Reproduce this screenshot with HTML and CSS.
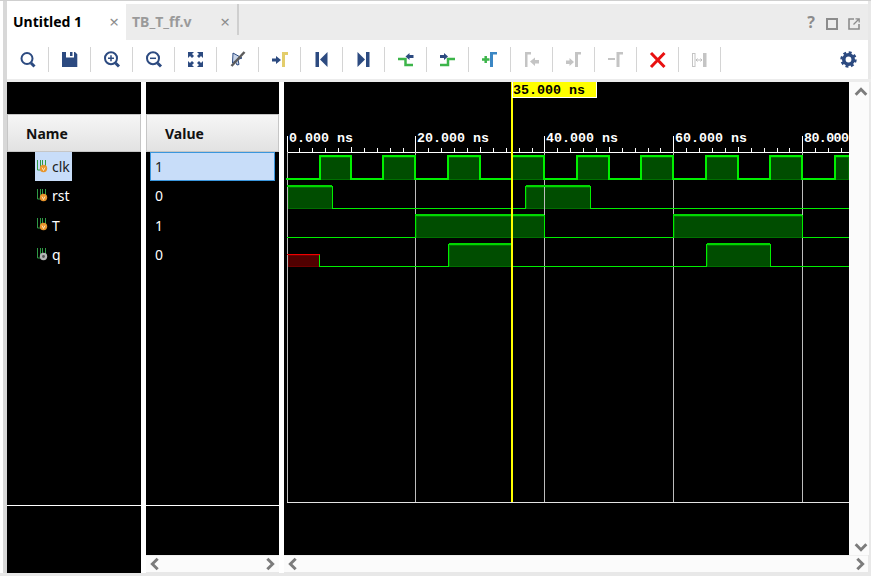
FILE: index.html
```html
<!DOCTYPE html>
<html lang="en">
<head>
    <meta charset="UTF-8">
    <title>Untitled 1</title>
    <link rel="stylesheet" href="styles.css">
</head>
<body>

<svg class="defs" width="0" height="0">
    <symbol id="sig-in" viewBox="0 0 12 14">
        <path d="M1.5 1v10h3V1M6.5 1v6h3V1" fill="none" stroke="#2f9a45"/>
        <circle cx="7.5" cy="9.5" r="3.7" fill="#e8952c"/>
        <path d="M6 8.5l1.5 3 1.5-3" fill="none" stroke="#fff3d8" stroke-width=".8"/>
    </symbol>
    <symbol id="sig-out" viewBox="0 0 12 14">
        <path d="M1.5 1v10h3V1M6.5 1v6h3V1" fill="none" stroke="#2f9a45"/>
        <circle cx="7.5" cy="9.5" r="3.7" fill="#b5b5b5"/>
        <circle cx="7.5" cy="9.5" r="1.4" fill="#555"/>
    </symbol>
</svg>

<div class="window">
    <div class="tabbar">
        <div class="tab active"><span>Untitled 1</span><span class="tab-close">×</span></div>
        <div class="tab"><span>TB_T_ff.v</span><span class="tab-close">×</span></div>
        <div class="tab-sep"></div>
        <div class="tab-tools">
            <span class="help">?</span>
            <svg width="12" height="12" viewBox="0 0 12 12"><rect x="1" y="1" width="10" height="10" fill="none" stroke="#8c8c8c" stroke-width="2"/></svg>
            <svg width="12" height="12" viewBox="0 0 12 12"><path d="M6 1H1v10h10V6" fill="none" stroke="#8c8c8c" stroke-width="1.6"/><path d="M5.5 6.500L11 1M7.500 .8H11.200V4.500" fill="none" stroke="#8c8c8c" stroke-width="1.300"/></svg>
        </div>
    </div>

    <div class="toolbar">
        <div class="tool"><svg viewBox="0 0 21 21"><circle cx="10" cy="9.500" r="5.500" class="ln"/><path d="M14 14l3.500 3.500" class="ln thick"/></svg></div>
        <div class="tool"><svg viewBox="0 0 21 21"><path d="M3 3h13l2.300 2.300V18H3z" class="navy"/><rect x="7" y="3" width="8" height="5.500" fill="#fff"/><rect x="11" y="3" width="2.500" height="4" class="navy"/></svg></div>
        <div class="tool"><svg viewBox="0 0 21 21"><circle cx="10" cy="9.300" r="6" class="ln"/><path d="M14.500 14l3.500 3.500" class="ln thick"/><path d="M7 9.300h6M10 6.300v6" class="ln thin"/></svg></div>
        <div class="tool"><svg viewBox="0 0 21 21"><circle cx="10" cy="9.300" r="6" class="ln"/><path d="M14.500 14l3.500 3.500" class="ln thick"/><path d="M7 9.300h6" class="ln thin"/></svg></div>
        <div class="tool"><svg viewBox="0 0 21 21"><path d="M3 3h6L7 5l2 2-2 2-2-2-2 2zM18 3v6l-2-2-2 2-2-2 2-2-2-2zM3 18v-6l2 2 2-2 2 2-2 2 2 2zM18 18h-6l2-2-2-2 2-2 2 2 2-2z" class="navy"/></svg></div>
        <div class="tool"><svg viewBox="0 0 21 21"><path d="M6 4l9 5-4 1.500 1 5-2 .5-2-4-2.500 2z" fill="#c9d5e8" stroke="#2c4a80"/><path d="M17.500 3L4.500 17" stroke="#5c5c5c" stroke-width="2.500" fill="none"/></svg></div>
        <div class="tool"><svg viewBox="0 0 21 21"><path d="M3 9.500h4V7l5 4-5 4v-2.500H3z" class="navy"/><path d="M13 18V3h6v3h-3v12z" fill="#e3cd6b"/></svg></div>
        <div class="tool"><svg viewBox="0 0 21 21"><rect x="4.500" y="3" width="3.500" height="15" class="navy"/><path d="M9 10.500L16.500 3v15z" class="navy"/></svg></div>
        <div class="tool"><svg viewBox="0 0 21 21"><path d="M4.500 3l7.500 7.500L4.500 18z" class="navy"/><rect x="13" y="3" width="3.500" height="15" class="navy"/></svg></div>
        <div class="tool"><svg viewBox="0 0 21 21"><path d="M3 10h7.500v6h7.500" class="edge"/><path d="M10.500 7.500l4-3.500v2h4v3h-4v2z" class="navy"/></svg></div>
        <div class="tool"><svg viewBox="0 0 21 21"><path d="M3 16h8v-6h7" class="edge"/><path d="M11 7.500l-4-3.500v2H3v3h4v2z" class="navy"/></svg></div>
        <div class="tool"><svg viewBox="0 0 21 21"><path d="M3 10.500h7.500M6.700 7v7" class="edge"/><path d="M11 18V3h7v2.500h-4V18z" fill="#3b87c4"/></svg></div>
        <div class="tool"><svg viewBox="0 0 21 21"><path d="M4 18V3h6v2.500H6.500V18z" class="off"/><path d="M9 12.500l5-4v2.500h4v3.500h-4V17z" class="off"/></svg></div>
        <div class="tool"><svg viewBox="0 0 21 21"><path d="M3 11.500h3.500V9l4.500 4-4.500 4v-2H3z" class="off"/><path d="M12 18V3h6v2.500h-3V18z" class="off"/></svg></div>
        <div class="tool"><svg viewBox="0 0 21 21"><rect x="3" y="9" width="7" height="2" class="off"/><path d="M11.500 18V3H18v2.500h-3.500V18z" class="off"/></svg></div>
        <div class="tool"><svg viewBox="0 0 21 21"><path d="M4 4l13.500 14M17.500 4L4 18" fill="none" stroke="#e81010" stroke-width="3"/></svg></div>
        <div class="tool"><svg viewBox="0 0 21 21"><rect x="3.500" y="4.500" width="2.500" height="13" fill="none" stroke="#c4c4c4"/><rect x="14" y="4" width="3.500" height="14" class="off"/><path d="M7 11h6M8.500 9.500L7 11l1.500 1.500M11.500 9.500L13 11l-1.500 1.500" fill="none" stroke="#bdbdbd"/></svg></div>
        <div class="gear"><svg viewBox="0 0 21 21"><circle cx="10.500" cy="10.500" r="4.700" fill="none" stroke="#2c4a80" stroke-width="3.600"/><circle cx="10.500" cy="10.500" r="7" fill="none" stroke="#2c4a80" stroke-width="2.400" stroke-dasharray="2.900 2.600"/></svg></div>
    </div>

    <div class="strip"></div>

    <div class="panes">
        <div class="col name-col">
            <div class="col-top"></div>
            <div class="col-head">Name</div>
            <div class="rows">
                <div class="row"><div class="sig selected"><svg class="sig-icon"><use href="#sig-in"/></svg>clk</div></div>
                <div class="row"><div class="sig"><svg class="sig-icon"><use href="#sig-in"/></svg>rst</div></div>
                <div class="row"><div class="sig"><svg class="sig-icon"><use href="#sig-in"/></svg>T</div></div>
                <div class="row"><div class="sig"><svg class="sig-icon"><use href="#sig-out"/></svg>q</div></div>
            </div>
            <div class="col-foot name-foot"></div>
        </div>

        <div class="col value-col">
            <div class="col-top"></div>
            <div class="col-head">Value</div>
            <div class="rows">
                <div class="row"><div class="val selected">1</div></div>
                <div class="row"><div class="val">0</div></div>
                <div class="row"><div class="val">1</div></div>
                <div class="row"><div class="val">0</div></div>
            </div>
            <div class="col-foot"></div>
            <div class="hbar">
                <svg class="chev" viewBox="0 0 12 12"><path d="M8 2L4 6l4 4"/></svg>
                <svg class="chev" viewBox="0 0 12 12"><path d="M4 2l4 4-4 4"/></svg>
            </div>
        </div>

        <div class="col wave-col">
            <div class="wave-main">
                <svg class="wave" viewBox="284 82 565 473">
                    <!-- ruler -->
                    <path class="ruler" d="M287.500 136V152M415.500 136V152M544.500 136V152M673.500 136V152M802.500 136V152M287 152.500H849"/>
                    <path class="ruler" d="M299.500 148v4M312.500 148v4M325.500 148v4M338.500 148v4M351.500 147v5M364.500 148v4M377.500 148v4M390.500 148v4M403.500 148v4
                        M428.500 148v4M441.500 148v4M454.500 148v4M467.500 148v4M480.500 147v5M493.500 148v4M506.500 148v4M519.500 148v4M532.500 148v4
                        M557.500 148v4M570.500 148v4M583.500 148v4M596.500 148v4M609.500 147v5M622.500 148v4M635.500 148v4M648.500 148v4M660.500 148v4
                        M686.500 148v4M699.500 148v4M712.500 148v4M725.500 148v4M738.500 147v5M751.500 148v4M764.500 148v4M777.500 148v4M789.500 148v4
                        M815.500 148v4M828.500 148v4M841.500 148v4"/>
                    <text class="ruler-label" x="289" y="142">0.000 ns</text>
                    <text class="ruler-label" x="417" y="142">20.000 ns</text>
                    <text class="ruler-label" x="546" y="142">40.000 ns</text>
                    <text class="ruler-label" x="675" y="142">60.000 ns</text>
                    <text class="ruler-label" x="804" y="142" textLength="45">80.000</text>

                    <!-- fills -->
                    <path class="fill" d="M320 157H351V179H320zM383 157H415V179H383zM448 157H480V179H448zM512 157H544V179H512zM577 157H609V179H577zM641 157H673V179H641zM706 157H738V179H706zM770 157H802V179H770zM835 157H848V179H835z"/>
                    <path class="fill" d="M288 187H332V208H288zM526 187H590V208H526z"/>
                    <path class="fill" d="M416 216H544V237H416zM674 216H802V237H674z"/>
                    <path class="fill" d="M449 245H511V266H449zM707 245H770V266H707z"/>
                    <rect class="fill-x" x="288" y="255" width="31" height="11"/>

                    <!-- grid -->
                    <path class="grid" d="M287.500 152V502M415.500 152V502M544.500 152V502M673.500 152V502M802.500 152V502"/>
                    <path class="frame-line" d="M287 502.500H849"/>

                    <!-- traces -->
                    <path class="trace" d="M286 179H320V156H351V179H383V156H415V179H448V156H480V179H512V156H544V179H577V156H609V179H641V156H673V179H706V156H738V179H770V156H802V179H835V156H849"/>
                    <path class="trace-top" d="M287 186H332M526 186H590M415 215H544M673 215H802M449 244H511M707 244H770"/>
                    <path class="trace-thin" d="M332.500 186V208.500H525.500V186M590.500 186V208.500H849"/>
                    <path class="trace-thin" d="M287 237.500H415.500V215M544.500 215V237.500H673.500V215M802.500 215V237.500H849"/>
                    <path class="trace-thin" d="M319.500 255V266.500H448.500V244M511 266.500H706.500V244M770.500 244V266.500H849"/>
                    <path class="trace-x" d="M287 254.500H319.500"/>

                    <!-- cursor -->
                    <rect class="cursor" x="511" y="82" width="2" height="420"/>
                    <rect class="cursor-tag" x="512.500" y="81.500" width="84" height="16"/>
                    <text class="cursor-label" x="513" y="94">35.000 ns</text>
                </svg>
                <div class="vbar">
                    <svg class="chev" viewBox="0 0 12 12"><path d="M2 8l4-4 4 4"/></svg>
                    <svg class="chev" viewBox="0 0 12 12"><path d="M2 4l4 4 4-4"/></svg>
                </div>
            </div>
            <div class="hbar wave-hbar">
                <svg class="chev" viewBox="0 0 12 12"><path d="M8 2L4 6l4 4"/></svg>
                <svg class="chev" viewBox="0 0 12 12"><path d="M4 2l4 4-4 4"/></svg>
            </div>
        </div>
    </div>
</div>

</body>
</html>
```

FILE: styles.css
```css
html, body {
    margin: 0;
    padding: 0;
}

body {
    width: 871px;
    height: 576px;
    box-sizing: border-box;
    border-top: 1px solid #cfcfcf;
    overflow: hidden;
    background-color: #e8e8e8;
    font-family: "Noto Sans", sans-serif;
    font-size: 14px;
    position: relative;
}

.defs {
    position: absolute;
}

.window {
    width: 861px;
    height: 569px;
    margin-left: 7px;
    padding-top: 3px;
    box-shadow: -4px 0 0 #d8d8d8, -7px 0 0 #fff;
    display: flex;
    flex-direction: column;
    background-color: #fff;
}

/* tabs */
.tabbar {
    height: 36px;
    display: flex;
    background-color: #ececec;
    flex-shrink: 0;
}

.tab {
    width: 111px;
    padding: 0 6px;
    box-sizing: border-box;
    display: flex;
    justify-content: space-between;
    align-items: center;
    padding-bottom: 1px;
    font-weight: bold;
    color: #9a9a9a;
}

.tab.active {
    width: 119px;
    background-color: #fff;
    color: #000;
}

.tab-close {
    font-weight: normal;
    font-size: 17px;
    color: #8e8e8e;
    padding-right: 1px;
}

.tab-sep {
    width: 2px;
    height: 31px;
    background-color: #cfcfcf;
}

.tab-tools {
    margin-left: auto;
    padding-right: 8px;
    padding-bottom: 10px;
    display: flex;
    align-items: flex-end;
    gap: 10px;
}

.help {
    font-weight: bold;
    font-size: 16px;
    line-height: 16px;
    color: #8c8c8c;
    margin-right: 1px;
}

/* toolbar */
.toolbar {
    height: 39px;
    display: flex;
    align-items: center;
    flex-shrink: 0;
    background-color: #fff;
}

.tool {
    width: 42px;
    height: 25px;
    box-sizing: border-box;
    border-right: 1px solid #d4d4d4;
    display: flex;
    align-items: center;
    justify-content: center;
}

.tool svg, .gear svg {
    width: 21px;
    height: 21px;
    display: block;
}

.gear {
    margin-left: auto;
    margin-right: 9px;
}

.ln {
    fill: none;
    stroke: #2c4a80;
    stroke-width: 2;
}

.ln.thick {
    stroke-width: 3;
}

.ln.thin {
    stroke-width: 1.5;
}

.navy {
    fill: #2c4a80;
}

.off {
    fill: #c4c4c4;
}

.edge {
    fill: none;
    stroke: #3cb54a;
    stroke-width: 2.5;
}

.strip {
    height: 3px;
    flex-shrink: 0;
    margin-right: -3px;
    background-color: #ececec;
}

/* panes */
.panes {
    flex: 1;
    display: flex;
    gap: 5px;
    min-height: 0;
}

.col {
    display: flex;
    flex-direction: column;
    flex-shrink: 0;
}

.name-col {
    width: 134px;
    background-color: #000;
}

.value-col {
    width: 133px;
    background-color: #000;
}

.wave-col {
    width: 584px;
    flex: 1;
}

.col-top {
    height: 32px;
    background-color: #000;
}

.col-head {
    height: 38px;
    box-sizing: border-box;
    border: 1px solid #c6c6c6;
    background: linear-gradient(#f6f6f6, #e2e2e2);
    font-weight: bold;
    color: #111;
    display: flex;
    align-items: center;
    padding-left: 18px;
}

.rows {
    flex: 1;
}

.row {
    height: 29.33px;
    color: #fff;
    display: flex;
}

.sig {
    display: flex;
    align-items: center;
    margin-left: 28px;
    padding: 0 2px 0 1px;
}

.sig.selected, .val.selected {
    background-color: #c8ddf9;
    color: #1c1c1c;
}

.sig-icon {
    width: 12px;
    height: 14px;
    margin-right: 4px;
    margin-top: -2px;
}

.val {
    flex: 1;
    display: flex;
    align-items: center;
    padding-left: 9px;
}

.val.selected {
    margin: 0 4px;
    padding-left: 4px;
    border: 1px solid #3a96dd;
}

.col-foot {
    height: 50px;
    flex-shrink: 0;
    box-sizing: border-box;
    border-top: 1px solid #fff;
    background-color: #000;
}

.name-foot {
    height: 68px;
}

/* scrollbars */
.hbar {
    height: 18px;
    flex-shrink: 0;
    box-sizing: border-box;
    border-top: 1px solid #f0f0f0;
    border-bottom: 1px solid #e8e8e8;
    background-color: #fbfbfb;
    display: flex;
    justify-content: space-between;
    align-items: center;
    padding: 0 1px;
}

.wave-hbar {
    padding-right: 0;
}

.chev {
    width: 16px;
    height: 16px;
    display: block;
}

.chev path {
    fill: none;
    stroke: #7c7c7c;
    stroke-width: 2.2;
}

.wave-main {
    height: 473px;
    display: flex;
}

.wave {
    width: 565px;
    height: 473px;
    display: block;
    background-color: #000;
    flex-shrink: 0;
}

.vbar {
    flex: 1;
    background-color: #fbfbfb;
    display: flex;
    flex-direction: column;
    justify-content: space-between;
    align-items: center;
    padding: 2px 0 0 4px;
}

/* waveform */
.ruler {
    fill: none;
    stroke: #fff;
    shape-rendering: crispEdges;
}

.ruler-label, .cursor-label {
    font-family: "Liberation Mono", monospace;
    font-weight: bold;
    font-size: 13.33px;
}

.ruler-label {
    fill: #fff;
}

.cursor-label {
    fill: #000;
}

.fill {
    fill: #004d00;
    stroke: #006f00;
    shape-rendering: crispEdges;
}

.fill-x {
    fill: #500000;
    stroke: #6e0000;
    shape-rendering: crispEdges;
}

.grid {
    fill: none;
    stroke: #bdbdbd;
    shape-rendering: crispEdges;
}

.frame-line {
    fill: none;
    stroke: #e4e4e4;
    shape-rendering: crispEdges;
}

.trace {
    fill: none;
    stroke: #00f000;
    stroke-width: 2;
    shape-rendering: crispEdges;
}

.trace-top {
    fill: none;
    stroke: #00d800;
    stroke-width: 2;
    shape-rendering: crispEdges;
}

.trace-thin {
    fill: none;
    stroke: #00ee00;
    shape-rendering: crispEdges;
}

.trace-x {
    fill: none;
    stroke: #f00000;
    shape-rendering: crispEdges;
}

.cursor {
    fill: #ffff00;
}

.cursor-tag {
    fill: #ffff00;
    stroke: #fff;
    shape-rendering: crispEdges;
}
```
